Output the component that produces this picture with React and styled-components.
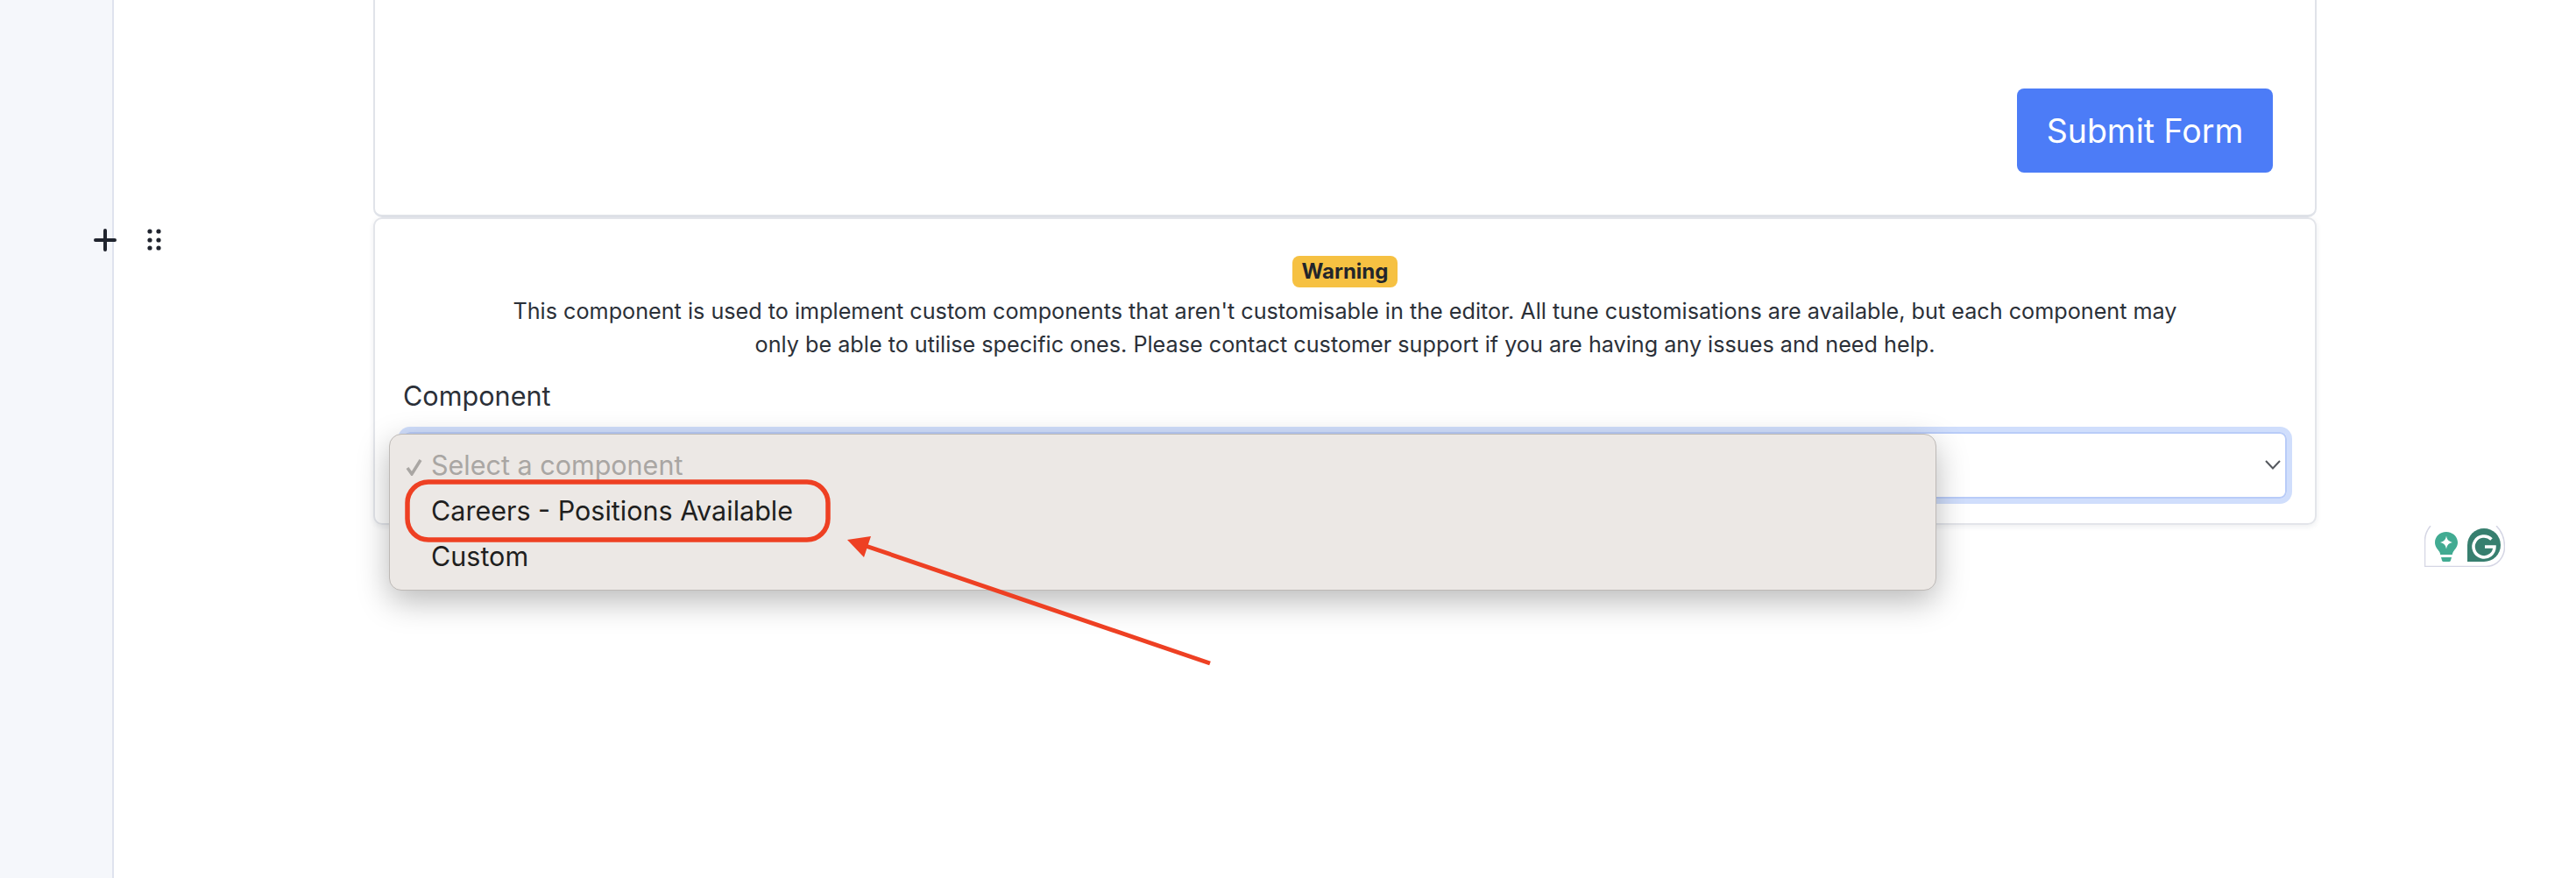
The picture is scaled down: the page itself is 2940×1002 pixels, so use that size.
import React from 'react';
import styled, { createGlobalStyle } from 'styled-components';

const Global = createGlobalStyle`
  html, body { margin: 0; padding: 0; background: #fff; }
  body { font-family: Inter, "Liberation Sans", sans-serif; color: #2b3038; }
`;

const Page = styled.div`
  position: relative;
  display: flex;
  height: 100vh;
  overflow: hidden;
`;

const Sidebar = styled.aside`
  flex: 0 0 128px;
  background: #f5f7fb;
  border-right: 2px solid #dfe3ee;
`;

const Main = styled.main`
  flex: 1;
  padding-left: 296px;
`;

const TopCard = styled.section`
  box-sizing: border-box;
  width: 2218px;
  height: 248px;
  display: flex;
  justify-content: flex-end;
  padding: 101px 48px 0 0;
  border: 2px solid #e0e3e9;
  border-top: 0;
  border-bottom-width: 3px;
  border-radius: 0 0 10px 10px;
`;

const SubmitButton = styled.button`
  width: 292px;
  height: 96px;
  border: 0;
  border-radius: 8px;
  background: #4c7cf7;
  color: #fff;
  font: 400 37.5px Inter, sans-serif;
`;

const WarningCard = styled.section`
  box-sizing: border-box;
  width: 2218px;
  height: 351px;
  padding: 42px 32px 0;
  border: 2px solid #e3e5ea;
  border-radius: 10px;
  box-shadow: 0 2px 6px rgba(30, 40, 60, 0.08);
  text-align: center;
`;

const Badge = styled.span`
  display: inline-block;
  height: 36px;
  padding: 0 11px;
  border-radius: 8px;
  background: #f6c142;
  color: #22252b;
  font-size: 24px;
  font-weight: 700;
  line-height: 36px;
`;

const Notice = styled.p`
  max-width: 1930px;
  margin: 8px auto 0;
  font-size: 25.2px;
  line-height: 38px;
`;

const Label = styled.label`
  display: block;
  margin-top: 21px;
  font-size: 30.6px;
  line-height: 38px;
  text-align: left;
`;

const SelectBox = styled.div`
  position: relative;
  box-sizing: border-box;
  height: 76px;
  margin-top: 22px;
  border: 2px solid #b9ccf8;
  border-radius: 8px;
  box-shadow: 0 0 0 6px #d0defc;
`;

const Chevron = styled.svg`
  position: absolute;
  right: 5px;
  top: 30px;
  width: 18px;
  height: 11px;
`;

const Popup = styled.ul`
  position: absolute;
  left: -18px;
  top: 0;
  box-sizing: border-box;
  width: 1766px;
  height: 179px;
  margin: 0;
  padding: 9px 0 0;
  list-style: none;
  border: 1px solid #bdb9b6;
  border-radius: 14px;
  background: #ece8e5;
  box-shadow: 0 12px 36px rgba(0, 0, 0, 0.28);
  text-align: left;
  z-index: 2;
`;

const Option = styled.li`
  position: relative;
  height: 52px;
  padding-left: 47px;
  font-size: 30.5px;
  line-height: 52px;
  color: ${(p) => (p.$muted ? '#a9a6a3' : '#1f1f20')};
`;

const Tick = styled.svg`
  position: absolute;
  left: 18px;
  top: 18px;
  width: 20px;
  height: 20px;
`;

const BlockTools = styled.div`
  position: absolute;
  left: 107px;
  top: 261px;
  display: flex;
  align-items: center;
  gap: 35px;
`;

const Annotation = styled.svg`
  position: absolute;
  inset: 0;
  width: 100%;
  height: 100%;
  pointer-events: none;
  z-index: 3;
`;

const GrammarlyBadge = styled.div`
  position: absolute;
  left: 2767px;
  top: 600px;
  width: 92px;
  height: 47px;
`;

const PlusIcon = () => (
  <svg width="26" height="26" viewBox="0 0 26 26">
    <path d="M13 2v22M2 13h22" stroke="#20242e" strokeWidth="4" strokeLinecap="round" />
  </svg>
);

const DragIcon = () => (
  <svg width="16" height="26" viewBox="0 0 16 26" fill="#20242e">
    {[3, 13, 22].map((y) => (
      <React.Fragment key={y}>
        <circle cx="3" cy={y} r="2.6" />
        <circle cx="13" cy={y} r="2.6" />
      </React.Fragment>
    ))}
  </svg>
);

const Grammarly = () => (
  <GrammarlyBadge>
    <svg width="92" height="47" viewBox="0 0 92 47" fill="none">
      <path d="M7 0C3 5 0.5 11 0.5 17V46.5H70C83 46.5 91.5 36 91.5 24C91.5 13 87 5 82 0" stroke="#d5d6e4" strokeWidth="1.5" />
      <path d="M25 7c-7.5 0-13 5.500-13 12 0 5 3 7.500 5 10.500 1 1.500 1.200 3.500 1.200 3.500h13.600s.2-2 1.200-3.500c2-3 5-5.500 5-10.500C38 12.500 32.500 7 25 7z" fill="#42ab92" />
      <path d="M25 11.500c.8 4.500 2.500 6.300 7 7.500-4.500 1.200-6.200 3-7 7.500-.8-4.500-2.500-6.300-7-7.500 4.500-1.200 6.200-3 7-7.500z" fill="#fff" />
      <path d="M19 36h12l-1 3.500a2 2 0 0 1-2 1.500h-6a2 2 0 0 1-2-1.500z" fill="#42ab92" />
      <path d="M68 3a19 19 0 0 1 0 38H49V22A19 19 0 0 1 68 3z" fill="#377f6f" />
      <path d="M76.500 15.500A12 12 0 1 0 80 24H69" stroke="#fff" strokeWidth="3.500" />
    </svg>
  </GrammarlyBadge>
);

const App = () => (
  <Page>
    <Global />
    <Sidebar />
    <Main>
      <TopCard>
        <SubmitButton>Submit Form</SubmitButton>
      </TopCard>
      <WarningCard>
        <Badge>Warning</Badge>
        <Notice>
          This component is used to implement custom components that aren't customisable in the editor. All tune
          customisations are available, but each component may only be able to utilise specific ones. Please contact
          customer support if you are having any issues and need help.
        </Notice>
        <Label>Component</Label>
        <SelectBox>
          <Chevron viewBox="0 0 18 11" fill="none">
            <path d="M1 1l8 8.500L17 1" stroke="#55585e" strokeWidth="2" />
          </Chevron>
          <Popup>
            <Option $muted>
              <Tick viewBox="0 0 20 20" fill="none">
                <path d="M2 11l5 7L17 2" stroke="#a9a6a3" strokeWidth="3.500" />
              </Tick>
              Select a component
            </Option>
            <Option>Careers - Positions Available</Option>
            <Option>Custom</Option>
          </Popup>
        </SelectBox>
      </WarningCard>
    </Main>
    <BlockTools>
      <PlusIcon />
      <DragIcon />
    </BlockTools>
    <Grammarly />
    <Annotation viewBox="0 0 2940 1002">
      <rect x="465" y="550" width="480" height="66" rx="24" fill="none" stroke="#ee4023" strokeWidth="5.500" />
      <path d="M1381 757L988 623" stroke="#ee4023" strokeWidth="5" fill="none" />
      <path d="M967 616L994 612L986 636z" fill="#ee4023" />
    </Annotation>
  </Page>
);

export default App;
